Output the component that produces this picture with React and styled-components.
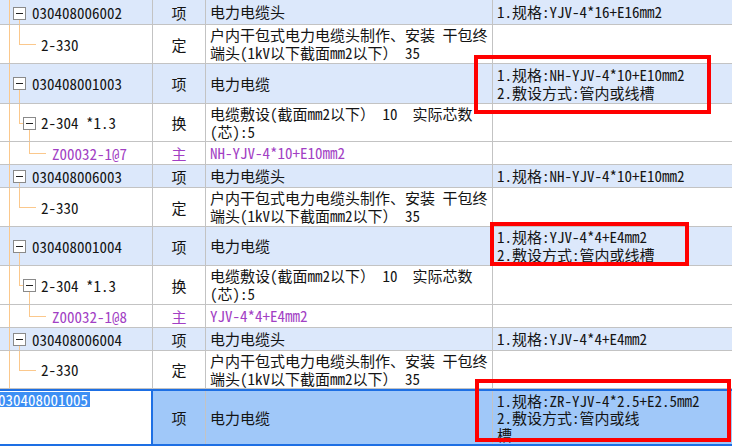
import React from 'react';
import styled, { createGlobalStyle } from 'styled-components';

const GlobalStyle = createGlobalStyle`
	html, body {
		margin: 0;
		padding: 0;
		background: #fff;
	}
	body {
		font-family: "Noto Sans Mono CJK SC", "Noto Sans CJK SC", "Liberation Mono", monospace;
		font-size: 15px;
		color: #141414;
	}
`;

const GRID = '#c3c3c3';
const TREE = '#fbc88c';
const BLUE = '#1d6fe4';

const Sheet = styled.div`
	position: relative;
	width: 732px;
	height: 446px;
	overflow: hidden;
`;

const Row = styled.div`
	display: grid;
	grid-template-columns: 153px 53px 287px 1fr;
	box-sizing: border-box;
	height: ${p => p.$h}px;
	background: ${p => p.$selected ? '#a0c8f9' : p.$item ? '#dce8fb' : '#fff'};
	border-top: ${p => p.$selected ? `2px solid ${BLUE}` : 'none'};
	border-bottom: ${p => p.$selected ? `2px solid ${BLUE}` : `1px solid ${GRID}`};
	color: ${p => p.$main ? '#a23fc4' : '#141414'};
`;

const CodeCell = styled.div`
	position: relative;
	display: flex;
	align-items: center;
	padding-left: ${p => p.$indent}px;
	border-right: ${p => p.$editing ? `2px solid ${BLUE}` : `1px solid ${GRID}`};
	background: ${p => p.$editing ? '#fff' : 'transparent'};
	white-space: nowrap;
	overflow: hidden;
	${p => p.$editing && 'align-items: flex-start; padding-top: 1px;'}
`;

const CodeText = styled.span`
	position: relative;
	z-index: 1;
`;

const EditText = styled.span`
	margin-left: -2px;
	padding-right: 2px;
	background: #3d8ff4;
	color: #fff;
	line-height: 15px;
`;

const TreeSvg = styled.svg`
	position: absolute;
	left: 0;
	top: 0;
	pointer-events: none;
`;

const TypeCell = styled.div`
	display: flex;
	align-items: center;
	justify-content: center;
	border-right: 1px solid ${GRID};
`;

const TextCell = styled.div`
	display: flex;
	flex-direction: column;
	justify-content: center;
	padding-left: 4px;
	line-height: ${p => p.$lh}px;
	white-space: pre;
	overflow: hidden;
	border-right: ${p => p.$last ? 'none' : `1px solid ${GRID}`};
`;

const Mark = styled.div`
	position: absolute;
	box-sizing: border-box;
	border: 4px solid #ff0000;
	pointer-events: none;
`;

// tree connector helpers
const root = h => [9.5, 0, 9.5, h];
const box = (x, y) => ({ x, y });

const rows = [
	{ h: 25, item: true, code: '030408006002', type: '项', indent: 32,
		desc: ['电力电缆头'], spec: ['1.规格:YJV-4*16+E16mm2'],
		lines: [root(25), [19.5, 20, 19.5, 25]], boxes: [box(13, 7)] },
	{ h: 39, code: '2-330', type: '定', indent: 41,
		desc: ['户内干包式电力电缆头制作、安装 干包终', '端头(1kV以下截面mm2以下） 35'], spec: [],
		lines: [root(39), [19.5, 0, 19.5, 19.5], [19.5, 19.5, 36, 19.5]] },
	{ h: 40, item: true, code: '030408001003', type: '项', indent: 32,
		desc: ['电力电缆'], spec: ['1.规格:NH-YJV-4*10+E10mm2', '2.敷设方式:管内或线槽'],
		lines: [root(40), [19.5, 26, 19.5, 40]], boxes: [box(13, 13)] },
	{ h: 38, code: '2-304 *1.3', type: '换', indent: 41,
		desc: ['电缆敷设(截面mm2以下） 10  实际芯数', '(芯):5'], spec: [],
		lines: [root(38), [19.5, 0, 19.5, 19.5], [19.5, 19.5, 23, 19.5], [29.5, 26, 29.5, 38]], boxes: [box(23, 13)] },
	{ h: 23, main: true, code: 'Z00032-1@7', type: '主', indent: 52,
		desc: ['NH-YJV-4*10+E10mm2'], spec: [],
		lines: [root(23), [29.5, 0, 29.5, 11.5], [29.5, 11.5, 46, 11.5]] },
	{ h: 23, item: true, code: '030408006003', type: '项', indent: 32,
		desc: ['电力电缆头'], spec: ['1.规格:NH-YJV-4*10+E10mm2'],
		lines: [root(23), [19.5, 18, 19.5, 23]], boxes: [box(13, 5)] },
	{ h: 39, code: '2-330', type: '定', indent: 41,
		desc: ['户内干包式电力电缆头制作、安装 干包终', '端头(1kV以下截面mm2以下） 35'], spec: [],
		lines: [root(39), [19.5, 0, 19.5, 19.5], [19.5, 19.5, 36, 19.5]] },
	{ h: 39, item: true, code: '030408001004', type: '项', indent: 32,
		desc: ['电力电缆'], spec: ['1.规格:YJV-4*4+E4mm2', '2.敷设方式:管内或线槽'],
		lines: [root(39), [19.5, 26, 19.5, 39]], boxes: [box(13, 13)] },
	{ h: 39, code: '2-304 *1.3', type: '换', indent: 41,
		desc: ['电缆敷设(截面mm2以下） 10  实际芯数', '(芯):5'], spec: [],
		lines: [root(39), [19.5, 0, 19.5, 19.5], [19.5, 19.5, 23, 19.5], [29.5, 26, 29.5, 39]], boxes: [box(23, 13)] },
	{ h: 23, main: true, code: 'Z00032-1@8', type: '主', indent: 52,
		desc: ['YJV-4*4+E4mm2'], spec: [],
		lines: [root(23), [29.5, 0, 29.5, 11.5], [29.5, 11.5, 46, 11.5]] },
	{ h: 23, item: true, code: '030408006004', type: '项', indent: 32,
		desc: ['电力电缆头'], spec: ['1.规格:YJV-4*4+E4mm2'],
		lines: [root(23), [19.5, 18, 19.5, 23]], boxes: [box(13, 5)] },
	{ h: 38, code: '2-330', type: '定', indent: 41,
		desc: ['户内干包式电力电缆头制作、安装 干包终', '端头(1kV以下截面mm2以下） 35'], spec: [],
		lines: [root(38), [19.5, 0, 19.5, 19.5], [19.5, 19.5, 36, 19.5]] },
];

function Tree({ h, lines = [], boxes = [] }) {
	return (
		<TreeSvg width="153" height={h} shapeRendering="crispEdges">
			{lines.map(([x1, y1, x2, y2], i) => (
				<line key={i} x1={x1} y1={y1} x2={x2} y2={y2} stroke={TREE} strokeWidth="1" />
			))}
			{boxes.map((b, i) => (
				<g key={'b' + i}>
					<rect x={b.x + 0.5} y={b.y + 0.5} width="12" height="12" fill="#fff" stroke="#8a8a8a" />
					<line x1={b.x + 3} y1={b.y + 6.5} x2={b.x + 10} y2={b.y + 6.5} stroke="#222" />
				</g>
			))}
		</TreeSvg>
	);
}

function GridRow({ row }) {
	return (
		<Row $h={row.h} $item={row.item} $main={row.main}>
			<CodeCell $indent={row.indent}>
				<Tree h={row.h} lines={row.lines} boxes={row.boxes} />
				<CodeText>{row.code}</CodeText>
			</CodeCell>
			<TypeCell>{row.type}</TypeCell>
			<TextCell $lh={18}>
				{row.desc.map((t, i) => <div key={i}>{t}</div>)}
			</TextCell>
			<TextCell $lh={18} $last>
				{row.spec.map((t, i) => <div key={i}>{t}</div>)}
			</TextCell>
		</Row>
	);
}

export default function App() {
	return (
		<>
			<GlobalStyle />
			<Sheet>
				{rows.map((row, i) => <GridRow key={i} row={row} />)}
				<Row $h={57} $selected>
					<CodeCell $indent={0} $editing>
						<EditText>030408001005</EditText>
					</CodeCell>
					<TypeCell>项</TypeCell>
					<TextCell $lh={18}>
						<div>电力电缆</div>
					</TextCell>
					<TextCell $lh={17} $last>
						<div>1.规格:ZR-YJV-4*2.5+E2.5mm2</div>
						<div>2.敷设方式:管内或线</div>
						<div>槽</div>
					</TextCell>
				</Row>
				<Mark style={{ left: 474, top: 55, width: 237, height: 59 }} />
				<Mark style={{ left: 490, top: 222, width: 199, height: 44 }} />
				<Mark style={{ left: 475, top: 379, width: 256, height: 63 }} />
			</Sheet>
		</>
	);
}
